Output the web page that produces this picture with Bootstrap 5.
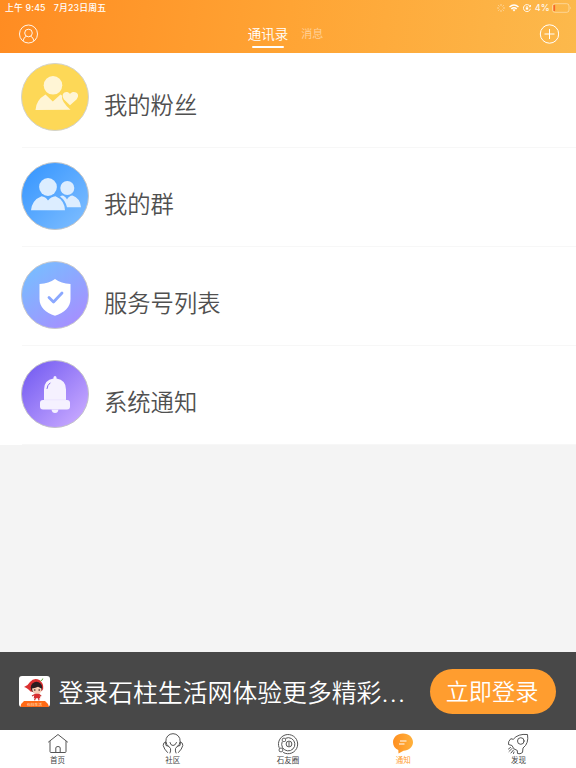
<!DOCTYPE html>
<html lang="zh-CN">
<head>
<meta charset="utf-8">
<meta name="viewport" content="width=device-width, initial-scale=1">
<title>通讯录</title>
<link href="https://cdn.jsdelivr.net/npm/bootstrap@5.3.0/dist/css/bootstrap.min.css" rel="stylesheet">
<style>
body{font-family:Inter,"Noto Sans CJK SC",sans-serif;background:#f4f4f4;height:768px;overflow:hidden;color:#555}
svg{display:block;flex:none}
.top-bar{height:53px;background:linear-gradient(97deg,#ff8c22 0%,#ffa434 50%,#fcb94c 100%);color:#fff}
.status-line{height:16px;padding:0 4px 0 5px;font-size:8.8px;line-height:16px;font-weight:500;letter-spacing:.2px}
.status-line .day{margin-left:8px}
.status-line .level{font-size:9px;margin:0 2px 0 4px;opacity:.9}
.title-line{height:37px;padding:0 17px 0 19px}
.tab-on{font-size:13.5px;line-height:20px;margin-top:8px;font-weight:350}
.tab-on::after{content:"";display:block;width:32px;height:2.5px;border-radius:2px;background:#fff;margin:1.5px auto 0}
.tab-off{font-size:11px;line-height:20px;margin:8px 0 0 13px;opacity:.5;font-weight:350}
.tab-group{margin-left:-6px}
.entries{--bs-list-group-border-radius:0}
.entry{height:99px;padding:0 0 0 21px;background:#fff;border:0;display:flex}
.entry:first-child{height:94.5px}
.entry-in{flex:1;border-bottom:1.5px solid #f7f7f7;display:flex;align-items:flex-start;padding-top:14px;margin-left:1px}
.entry-in svg{margin-left:-1.5px}
.entry:first-child .entry-in{padding-top:9.5px}
.entry-name{font-size:23.3px;line-height:34px;margin:26.5px 0 0 15.5px;font-weight:350;color:#505050}
.login-bar{height:78px;background:#484848;color:#fff;padding:0 20.5px 0 19px}
.login-msg{font-size:24.85px;line-height:36px;margin:4px 0 0 8.5px;width:354px;font-weight:350}
.login-msg span{letter-spacing:1.3px}
.login-btn{width:126px;height:45px;background:#ff9d2f;color:#fff;font-size:23.2px;line-height:34px;padding:2px 1px 0 0;border:0;font-weight:350;margin-left:auto}
.login-btn:hover{background:#f6921f;color:#fff}
.bottom-nav{height:38px;background:#fff;padding-top:3px}
.bottom-nav a{font-size:7.5px;line-height:12px;color:#444;text-decoration:none}
.bottom-nav a.on{color:#ff9d2f}
</style>
<script src="https://cdn.jsdelivr.net/npm/bootstrap@5.3.0/dist/js/bootstrap.bundle.min.js"></script>
</head>
<body class="d-flex flex-column">
<header class="top-bar flex-shrink-0">
  <div class="status-line d-flex align-items-center">
    <span>上午 9:45</span><span class="day">7月23日周五</span>
    <svg class="ms-auto" width="8" height="8" viewBox="0 0 8 8" stroke="#fff" stroke-width=".8" opacity=".55"><path d="M4 0v2M4 6v2M0 4h2M6 4h2M1.2 1.2l1.3 1.3M5.5 5.5l1.3 1.3M6.8 1.2L5.500 2.500M2.500 5.500L1.200 6.800"/></svg>
    <svg class="ms-1" width="10" height="8" viewBox="0 0 10 8" fill="none" stroke="#fff" stroke-width="1.5"><path d="M.5 3Q5-1 9.500 3M2.300 4.900Q5 2.600 7.700 4.900"/><path d="M3.500 5.800Q5 4.600 6.500 5.800L5 7.600z" fill="#fff" stroke="none"/></svg>
    <svg class="ms-1" width="8" height="8" viewBox="0 0 8 8" fill="none" stroke="#fff" stroke-width=".9"><path d="M7 2.300A3.500 3.500 0 1 0 7.400 4.800M7.500 1v1.700H6"/><rect x="2.800" y="3.700" width="2.400" height="1.900" fill="#fff" stroke="none"/><path d="M3.300 4V3a.7.7 0 0 1 1.400 0v1" stroke-width=".6"/></svg>
    <span class="level">4%</span>
    <svg width="20" height="10" viewBox="0 0 20 10"><rect x=".5" y=".7" width="16.500" height="8.600" rx="2.300" fill="none" stroke="#fff" stroke-opacity=".5" stroke-width=".8"/><rect x="1.500" y="2" width="1.600" height="6" rx=".6" fill="#f4622d"/><path d="M18.300 3.500q1.200 1.500 0 3z" fill="#fff" opacity=".6"/></svg>
  </div>
  <div class="title-line d-flex align-items-start justify-content-between">
    <svg class="mt-2" width="19" height="20" viewBox="0 0 19 20" fill="none" stroke="#fff" stroke-opacity=".9"><circle cx="9.500" cy="10" r="9"/><circle cx="9.500" cy="9" r="3.800"/><path d="M4 17Q5 12.700 7.500 12.200M11.500 12.200Q14 12.700 15 17"/></svg>
    <div class="tab-group d-flex"><div class="tab-on">通讯录</div><div class="tab-off">消息</div></div>
    <svg class="mt-2" width="20" height="20" viewBox="0 0 20 20" fill="none" stroke="#fff"><circle cx="10.500" cy="10" r="9.200"/><path d="M10.500 5v10M5.500 10h10"/></svg>
  </div>
</header>

<main class="list-group entries flex-shrink-0">
  <div class="list-group-item entry"><div class="entry-in">
    <svg width="68" height="68" viewBox="0 0 68 68"><circle cx="34" cy="34" r="33.500" fill="#fdd857" stroke="#d2d2cb"/><g fill="#fff5d5"><circle cx="32" cy="22.300" r="9.300"/><path d="M14.500 47Q15 37 24.500 31.500L31.800 38.500 39.500 31.500Q40.500 32 41 32.800Q40 38.500 49.500 46.800z"/><path d="M49 42.300L43 36.500C38.800 30.500 45.600 26.600 49 31C52.500 26.600 60.500 30.500 55.500 36.500z"/></g></svg>
    <div class="entry-name">我的粉丝</div></div></div>
  <div class="list-group-item entry"><div class="entry-in">
    <svg width="68" height="68" viewBox="0 0 68 68"><defs><linearGradient id="blue" x1="0" y1="0" x2="1" y2="1"><stop offset=".1" stop-color="#3a98ff"/><stop offset=".9" stop-color="#7abbff"/></linearGradient></defs><circle cx="34" cy="34" r="33.500" fill="url(#blue)" stroke="#c4c6c8"/><g fill="#dcedff"><circle cx="27" cy="25" r="8.900"/><path d="M10 48.300Q11 38 20.500 34.200Q24.500 34.500 27 38.500Q30 34.500 34.500 34.200Q43.500 38 44 48.300z"/><circle cx="46.300" cy="26" r="7"/><path d="M39 34.500L41 33.500Q44 33.800 46 37.500Q48 33.800 51.500 33.500Q59 36 60 45.200H46Q44.500 38.500 39 34.500z"/></g></svg>
    <div class="entry-name">我的群</div></div></div>
  <div class="list-group-item entry"><div class="entry-in">
    <svg width="68" height="68" viewBox="0 0 68 68"><defs><linearGradient id="violet" x1=".15" y1=".1" x2=".8" y2=".95"><stop stop-color="#79bcff"/><stop offset="1" stop-color="#a68fff"/></linearGradient></defs><circle cx="34" cy="34" r="33.500" fill="url(#violet)" stroke="#c8c8cc"/><path d="M34 18Q40 22.500 49.500 23V38C49.500 46 43.500 52 34 54.800C24.500 52 18.500 46 18.500 38V23Q28 22.500 34 18z" fill="#fff"/><path d="M28 36.500L32.500 41 41 32" fill="none" stroke="#8ba8ff" stroke-width="2.800" stroke-linecap="round" stroke-linejoin="round"/></svg>
    <div class="entry-name">服务号列表</div></div></div>
  <div class="list-group-item entry"><div class="entry-in">
    <svg width="68" height="68" viewBox="0 0 68 68"><defs><linearGradient id="purple" x1=".1" y1=".1" x2=".9" y2=".9"><stop stop-color="#775ff2"/><stop offset="1" stop-color="#c7a8ff"/></linearGradient></defs><circle cx="34" cy="34" r="33.500" fill="url(#purple)" stroke="#c4c2c9"/><g fill="#f5f1ff"><path d="M32.500 18.500V17.500a1.500 1.500 0 0 1 3 0V18.500Q45 20 45 29.500V40H23V29.500Q23 20 32.500 18.500z"/><rect x="19" y="40" width="30" height="9.500" rx="3"/><path d="M30.500 49.500H37.500Q37 53 34 53Q31 53 30.500 49.500z"/></g><path d="M23 39.800H45" stroke="#e6dcff" stroke-width=".6"/><path d="M26 28.500Q26.300 25 29 23" stroke="#7e67ef" fill="none" stroke-linecap="round"/></svg>
    <div class="entry-name">系统通知</div></div></div>
</main>

<section class="login-bar d-flex align-items-center mt-auto flex-shrink-0">
  <svg width="31" height="31" viewBox="0 0 31 31"><rect width="31" height="31" rx="3" fill="#fff"/><path d="M1.500 31Q2 27 5 25H26Q29 27 30 31z" fill="#ff6a16"/><path d="M5 11Q9 9.500 11 6Q15 1 20.500 4Q25 7.500 24.200 13Q22 18 11.500 15.500Q8 11.500 5 11z" fill="#db3030"/><path d="M21.500 5Q23.500 4.500 23.800 2.500" fill="none" stroke="#65a83a"/><circle cx="17.500" cy="11.500" r="5.700" fill="#2c1d20"/><path d="M13 12.500Q17 12 19 10.800L22.500 12.500Q23 17.500 18 18Q13.500 17.500 13 12.500z" fill="#f7cdb5"/><circle cx="15.800" cy="14" r=".8" fill="#35201c"/><circle cx="20.200" cy="14" r=".8" fill="#35201c"/><path d="M15.500 17.800h5l.8 4.400h-6.600z" fill="#d92d30"/><path d="M15.800 18.500l-2.800 1.500M20.200 18.500l2 1.800M16.500 22l-1 2.300M19.500 22l.5 2.300" stroke="#c93634" stroke-width="1.200"/><text x="15.500" y="29.500" text-anchor="middle" font-size="3.800" fill="#ffe0c8">石柱生活</text></svg>
  <div class="login-msg text-nowrap">登录石柱生活网体验更多精彩<span>...</span></div>
  <button type="button" class="btn rounded-pill login-btn">立即登录</button>
</section>

<nav class="bottom-nav d-flex flex-shrink-0">
  <a href="#" class="col d-flex flex-column align-items-center"><svg width="22" height="22" viewBox="0 0 22 22" fill="none" stroke="#555" stroke-linejoin="round" stroke-linecap="round"><path d="M1.500 9L11 1.500 20.500 9M3 8.500V18.500Q3 19.500 4 19.500H18Q19 19.500 19 18.500V8.500M8.800 19V15Q8.800 13.500 11 13.500T13.200 15V19"/></svg>首页</a>
  <a href="#" class="col d-flex flex-column align-items-center"><svg width="22" height="22" viewBox="0 0 22 22" fill="none" stroke="#555" stroke-linecap="round" stroke-linejoin="round"><path d="M6.500 13.500A7.200 7.200 0 1 1 15.500 13.500M8 9.500Q8.500 12.500 11 12.500T14.500 9.500M3.500 9Q1 9.500 1.200 12.500Q2 16 5.500 19.500M3.500 9L4 12.500Q7 12.500 8.500 15.500Q9 18 8 20M18.500 9Q21 9.500 20.800 12.500Q20 16 16.500 19.500M18.500 9L18 12.500Q15 12.500 13.500 15.500Q13 18 14 20"/></svg>社区</a>
  <a href="#" class="col d-flex flex-column align-items-center"><svg width="22" height="22" viewBox="0 0 22 22" fill="none" stroke="#555"><path d="M2.200 14.800A9.600 9.600 0 1 1 6.200 19.400"/><path d="M5.200 8.700A6.600 6.600 0 1 0 8.500 5.300"/><circle cx="12" cy="11" r="2.900"/><path d="M12 9v4"/><rect x="5.300" y="5.300" width="3.200" height="3.200" rx="1"/><rect x="2.200" y="15.200" width="3.500" height="3.500" rx="1"/></svg>石友圈</a>
  <a href="#" class="col d-flex flex-column align-items-center on"><svg width="22" height="22" viewBox="0 0 22 22"><defs><linearGradient id="bubble"><stop stop-color="#ff8f20"/><stop offset="1" stop-color="#ffb13c"/></linearGradient></defs><path d="M11 .5C17 .5 21 4.500 21 9.300S16.500 17.500 11.500 17.800L6.500 20.500 6.300 17C3 15.500 1 13 1 9.300 1 4.500 5 .5 11 .5z" fill="url(#bubble)"/><path d="M8 8h6.500M7 11h5.500" stroke="#fff"/></svg>通知</a>
  <a href="#" class="col d-flex flex-column align-items-center"><svg width="22" height="22" viewBox="0 0 22 22" fill="none" stroke="#555" stroke-linejoin="round" stroke-linecap="round"><path d="M6.500 6Q11 .5 20.500 1.500Q22 10.500 16 15L15.500 19.500Q13 21.500 10.500 20.500L10.300 17.500Q6 16.500 5 12.500L1.500 11.500Q.8 8.500 3.500 6z"/><circle cx="13.800" cy="8" r="3.300"/><path d="M5 15.500L2 18.500M6.500 17L4 20M3.500 14.500L1.500 16M7 19L6.500 20.500"/></svg>发现</a>
</nav>
</body>
</html>
